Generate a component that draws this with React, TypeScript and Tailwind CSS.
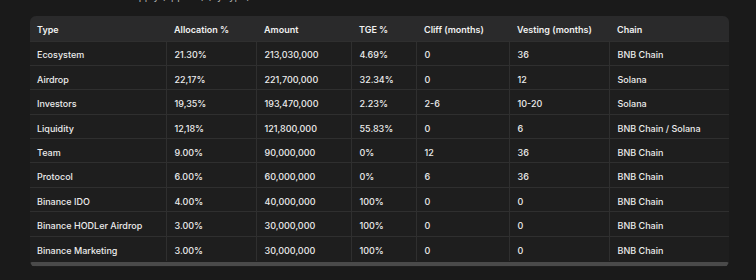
import React from "react";

const rows: string[][] = [
  ["Ecosystem", "21.30%", "213,030,000", "4.69%", "0", "36", "BNB Chain"],
  ["Airdrop", "22,17%", "221,700,000", "32.34%", "0", "12", "Solana"],
  ["Investors", "19,35%", "193,470,000", "2.23%", "2-6", "10-20", "Solana"],
  ["Liquidity", "12,18%", "121,800,000", "55.83%", "0", "6", "BNB Chain / Solana"],
  ["Team", "9.00%", "90,000,000", "0%", "12", "36", "BNB Chain"],
  ["Protocol", "6.00%", "60,000,000", "0%", "6", "36", "BNB Chain"],
  ["Binance IDO", "4.00%", "40,000,000", "100%", "0", "0", "BNB Chain"],
  ["Binance HODLer Airdrop", "3.00%", "30,000,000", "100%", "0", "0", "BNB Chain"],
  ["Binance Marketing", "3.00%", "30,000,000", "100%", "0", "0", "BNB Chain"],
];

const headers = ["Type", "Allocation %", "Amount", "TGE %", "Cliff (months)", "Vesting (months)", "Chain"];
const widths = ["w-[136px]", "w-[90px]", "w-[95px]", "w-[65px]", "w-[93px]", "w-[100px]", "w-[120px]"];

export default function App() {
  return (
    <div
      className="w-[756px] h-[280px] bg-[#1a1a1a] overflow-hidden text-[#ececec]"
      style={{ fontFamily: "Inter, 'Noto Sans', sans-serif" }}
    >
      <div className="h-[4px] overflow-hidden relative">
        <div className="absolute left-[96px] top-[-11px] text-[10px] text-[#b0b0b0] whitespace-nowrap">
          Token supply (approx.) (by type)
        </div>
      </div>
      <div className="ml-[30px] mt-[12px] w-[699px] rounded-[6px] bg-[#1e1e1e] overflow-hidden">
        <table className="table-fixed border-collapse w-[699px] text-[9px]">
          <colgroup>
            {widths.map((w, i) => (
              <col key={i} className={w} />
            ))}
          </colgroup>
          <thead>
            <tr className="bg-[#2a2a2b] h-[25px]">
              {headers.map((h, i) => (
                <th
                  key={i}
                  className={`text-left font-semibold text-[#f0f0f0] p-0 pt-[2px] ${i === 0 ? "pl-[7px]" : "pl-[8px]"}`}
                >
                  {h}
                </th>
              ))}
            </tr>
          </thead>
          <tbody>
            {rows.map((r, ri) => (
              <tr key={ri} className="h-[24.4px] border-t border-[#2f2f2f]">
                {r.map((c, ci) => (
                  <td
                    key={ci}
                    className={`p-0 pt-[4px] font-medium whitespace-nowrap ${ci === 0 ? "pl-[7px]" : "pl-[8px] border-l border-[#2f2f2f]"}`}
                  >
                    {c}
                  </td>
                ))}
              </tr>
            ))}
          </tbody>
        </table>
        <div className="h-[6px] pt-[1px] bg-[#1e1e1e]">
          <div className="h-[4px] bg-[#4a4a4a] rounded-full" />
        </div>
      </div>
    </div>
  );
}
